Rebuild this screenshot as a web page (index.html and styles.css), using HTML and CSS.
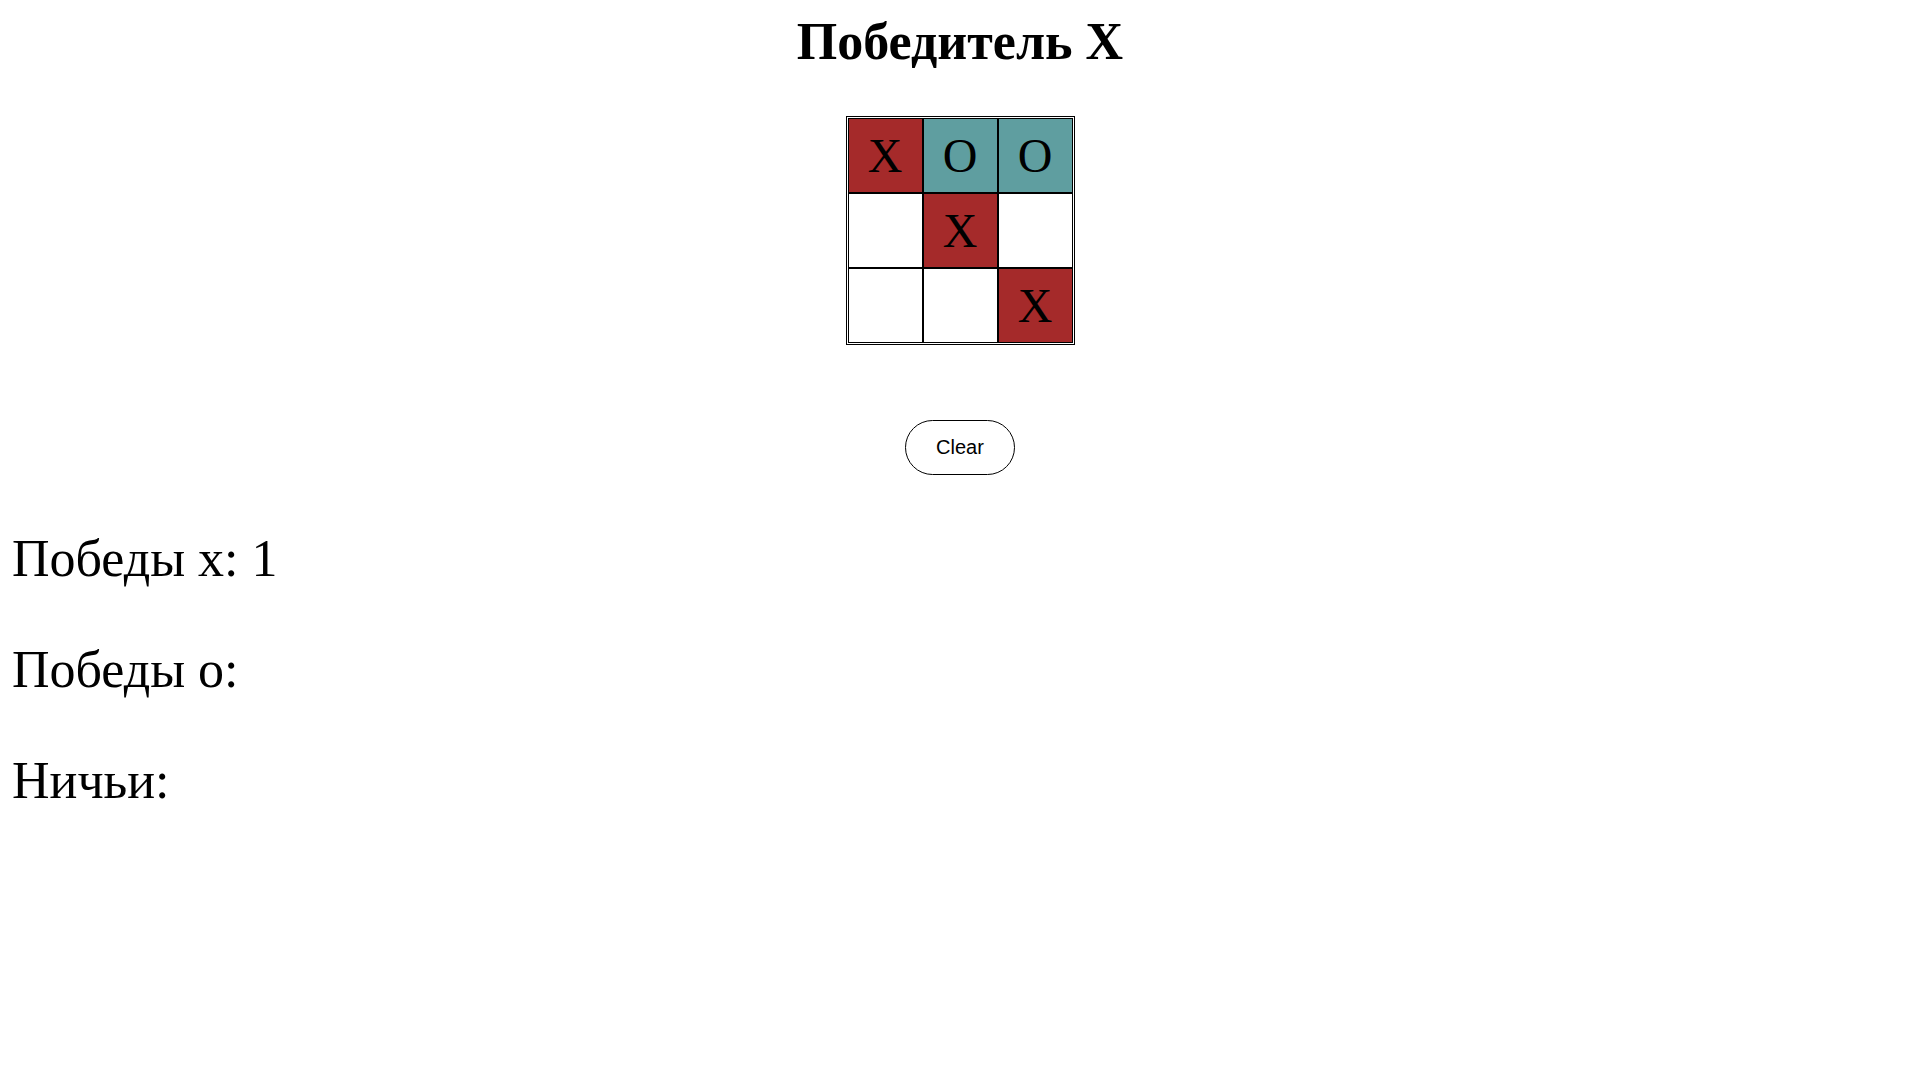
FILE: index.html
```html
<!DOCTYPE html>
<html lang="ru">
<head>
    <meta charset="UTF-8">
    <meta name="viewport" content="width=device-width, initial-scale=1.0">
    <title>Крестики-нолики</title>
    <link rel="stylesheet" href="styles.css">
</head>
<body>
    <div class="game">
        <h1 class="status">Победитель X</h1>

        <!-- Game board -->
        <div class="board">
            <div class="cell x">X</div>
            <div class="cell o">O</div>
            <div class="cell o">O</div>
            <div class="cell"></div>
            <div class="cell x">X</div>
            <div class="cell"></div>
            <div class="cell"></div>
            <div class="cell"></div>
            <div class="cell x">X</div>
        </div>

        <button class="clear-btn">Clear</button>
    </div>

    <!-- Score -->
    <div class="score">
        <p>Победы x: 1</p>
        <p>Победы o: </p>
        <p>Ничьи: </p>
    </div>
</body>
</html>
```

FILE: styles.css
```css
body {
    margin: 8px;
    font-family: "Liberation Serif", "Times New Roman", serif;
    color: #000;
    background-color: #fff;
}
.game {
    display: flex;
    flex-direction: column;
    align-items: center;
}
.status {
    font-size: 52px;
    font-weight: bold;
    margin: 4px 0 0 0;
}
.board {
    display: grid;
    grid-template-columns: repeat(3, 75px);
    grid-auto-rows: 75px;
    border: 1px solid #000;
    padding: 1px;
    margin-top: 45px;
}
.cell {
    box-sizing: border-box;
    border: 1px solid #000;
    display: flex;
    align-items: center;
    justify-content: center;
    font-size: 48px;
}
.cell.x {
    background-color: #a52a2a;
}
.cell.o {
    background-color: #5f9ea0;
}
.clear-btn {
    margin-top: 75px;
    width: 110px;
    height: 55px;
    background-color: #fff;
    border: 1px solid #000;
    border-radius: 28px;
    font-family: "Liberation Sans", Arial, sans-serif;
    font-size: 20px;
    color: #000;
    cursor: pointer;
}
.score {
    margin-top: 54px;
    padding-left: 4px;
}
.score p {
    font-size: 52px;
    margin: 0 0 52px 0;
}
```
